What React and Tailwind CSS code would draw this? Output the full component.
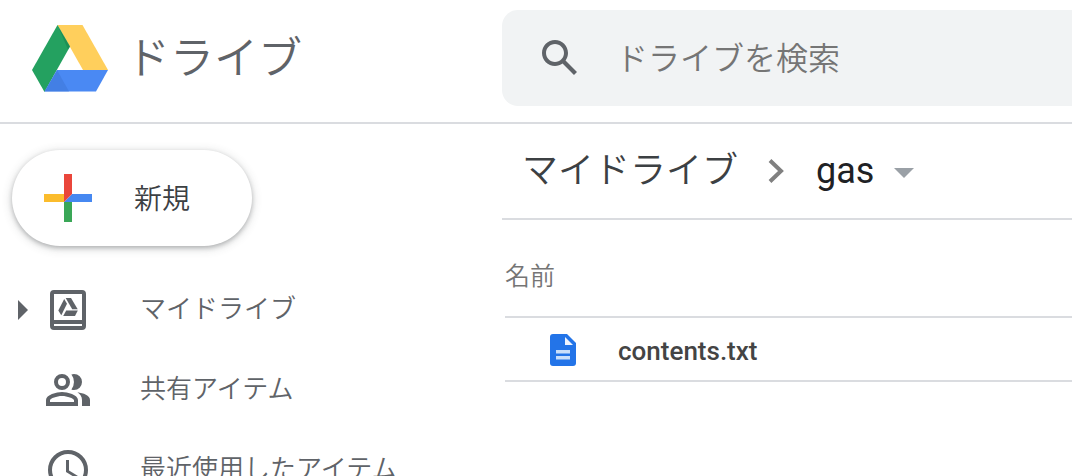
import React from "react";

function DriveLogo() {
  return (
    <svg viewBox="0 0 76 67" className="h-[67px] w-[76px] shrink-0" aria-hidden="true">
      <path d="M25.5 0H50.5L76 45H51Z" fill="#ffcf5c" />
      <path d="M0 45L25.5 0L38 21.500L12.5 67Z" fill="#24a160" />
      <path d="M25.5 0L38 21.500L36 24.500Z" fill="#15804a" opacity=".5" />
      <path d="M12.5 66.500L25 45H76L64 66.500Z" fill="#4a89f3" />
      <path d="M12.5 66.500L25 45L37 66.500Z" fill="#3f78da" opacity=".6" />
    </svg>
  );
}

function SearchIcon() {
  return (
    <svg viewBox="0 0 24 24" className="size-12" fill="#5f6368" aria-hidden="true">
      <path d="M20.49,19l-5.73-5.73C15.53,12.2,16,10.91,16,9.5C16,5.91,13.09,3,9.5,3S3,5.91,3,9.5C3,13.09,5.91,16,9.5,16c1.41,0,2.7-0.47,3.77-1.24L19,20.49L20.49,19z M5,9.5C5,7.01,7.01,5,9.5,5S14,7.01,14,9.5S11.99,14,9.5,14S5,11.99,5,9.5z" />
    </svg>
  );
}

function PlusIcon() {
  return (
    <svg viewBox="0 0 48 48" className="size-12 shrink-0" aria-hidden="true">
      <path d="M20 28V48H28V28L24 26Z" fill="#3aa757" />
      <path d="M20 28L28 20H48V28Z" fill="#4688f1" />
      <path d="M0 20H20V28H0Z" fill="#fbbc2c" />
      <path d="M20 0H28V20L20 28Z" fill="#ea463b" />
    </svg>
  );
}

function MyDriveIcon() {
  return (
    <svg viewBox="0 0 48 48" className="size-12" fill="#5f6368" aria-hidden="true">
      <path fillRule="evenodd" d="M10 4H38a4 4 0 0 1 4 4V40a4 4 0 0 1-4 4H10a4 4 0 0 1-4-4V8a4 4 0 0 1 4-4ZM10 8V34H38V8ZM10 38V40H38V38Z" />
      <path d="M20.2 13L23 17.8L17.300 29.300L14.3 24.500Z" />
      <path d="M21.700 12H27L33.700 23.200H28.200Z" />
      <path d="M22.200 24.500H33.800L31 30H19.200Z" />
    </svg>
  );
}

function PeopleIcon() {
  return (
    <svg viewBox="0 0 48 48" className="size-12" fill="#5f6368" aria-hidden="true">
      <path fillRule="evenodd" d="M18 24a8 8 0 1 0 0-16 8 8 0 0 0 0 16ZM18 12a4 4 0 1 1 0 8 4 4 0 0 1 0-8Z" />
      <path fillRule="evenodd" d="M18 26C12.7 26 2 28.7 2 34V40H34V34C34 28.7 23.3 26 18 26ZM6 36V34C6.400 32.600 12.600 30 18 30S29.600 32.600 30 34V36Z" />
      <path d="M27.400 23.400A12 12 0 0 0 27.400 8.600C28.200 8.200 29.100 8 30 8a8 8 0 0 1 0 16c-.9 0-1.800-.2-2.600-.6Z" />
      <path d="M33.400 26.300C36.100 28.200 38 30.700 38 34V40H46V34C46 29.400 39.400 27.200 33.400 26.300Z" />
    </svg>
  );
}

function ClockIcon() {
  return (
    <svg viewBox="0 0 48 48" className="size-12" aria-hidden="true">
      <circle cx="24" cy="24" r="18" fill="none" stroke="#5f6368" strokeWidth="4" />
      <path d="M22 14H25V24.500L34 30L32.500 32.400L22 26Z" fill="#5f6368" />
    </svg>
  );
}

function FileIcon() {
  return (
    <svg viewBox="0 0 28 32" className="h-8 w-7" aria-hidden="true">
      <path d="M4 0H18L27 9V29a3 3 0 0 1-3 3H4a3 3 0 0 1-3-3V3a3 3 0 0 1 3-3Z" fill="#2374e8" />
      <path d="M16 3L24 11H16Z" fill="#eef4fe" />
      <path d="M7 16H21V19.500H7ZM7 22H21V25.500H7Z" fill="#c9defa" />
    </svg>
  );
}

const navItems = [
  { label: "マイドライブ", Icon: MyDriveIcon, expandable: true },
  { label: "共有アイテム", Icon: PeopleIcon },
  { label: "最近使用したアイテム", Icon: ClockIcon },
];

export default function App() {
  return (
    <div className="h-screen overflow-hidden bg-white font-['Noto_Sans_CJK_JP',sans-serif] font-[350] text-[#5f6368]">
      <header className="flex border-b-2 border-[#dadce0] pt-[10px] pb-4">
        <a href="#" className="flex w-[502px] shrink-0 items-center gap-[18px] pl-8">
          <DriveLogo />
          <span className="pb-1.5 text-[44px] leading-[56px]">ドライブ</span>
        </a>
        <form role="search" className="flex h-24 min-w-0 flex-1 items-center rounded-l-2xl bg-[#f1f3f4] pl-[34px]">
          <button type="button" aria-label="検索" className="size-12 shrink-0">
            <SearchIcon />
          </button>
          <input
            type="search"
            aria-label="ドライブを検索"
            placeholder="ドライブを検索"
            className="ml-8 h-12 min-w-0 flex-1 bg-transparent pb-1 text-[32px] leading-12 outline-none placeholder:text-[#757575]"
          />
        </form>
      </header>

      <div className="flex">
        <aside className="w-[502px] shrink-0 pt-[26px]">
          <button className="ml-3 flex h-24 w-60 items-center gap-[42px] rounded-full bg-white pl-8 text-[28px] text-[#3c4043] shadow-[0_2px_4px_rgba(60,64,67,0.3),0_2px_8px_2px_rgba(60,64,67,0.15)]">
            <PlusIcon />
            <span className="pb-0.5">新規</span>
          </button>
          <nav className="mt-6">
            <ul>
              {navItems.map(({ label, Icon, expandable }) => (
                <li key={label}>
                  <a href="#" className="flex h-20 items-center text-[26px] leading-10">
                    <span className="flex w-11 justify-end pr-4">
                      {expandable && (
                        <svg viewBox="0 0 10 20" className="h-5 w-[10px]" aria-hidden="true">
                          <path d="M0 0L10 10L0 20Z" fill="#5f6368" />
                        </svg>
                      )}
                    </span>
                    <Icon />
                    <span className="ml-12 pb-1.5">{label}</span>
                  </a>
                </li>
              ))}
            </ul>
          </nav>
        </aside>

        <main className="min-w-0 flex-1">
          <nav aria-label="パンくずリスト" className="flex h-24 items-center border-b-2 border-[#dadce0] pl-5 text-[36px] leading-12">
            <a href="#" className="pb-2 text-[#3c4043]">マイドライブ</a>
            <svg viewBox="0 0 16 24" className="ml-[30px] h-6 w-4" aria-hidden="true">
              <path d="M2 1.500L13 12L2 22.500" fill="none" stroke="#808080" strokeWidth="4" />
            </svg>
            <button className="ml-8 flex items-center gap-5 font-['Roboto',sans-serif] font-normal text-[#202124]">
              gas
              <svg viewBox="0 0 20 10" className="mt-1 h-[10px] w-5" aria-hidden="true">
                <path d="M0 0H20L10 10Z" fill="#9aa0a6" />
              </svg>
            </button>
          </nav>
          <div className="pl-[3px]">
            <table className="w-full border-separate border-spacing-0 text-left">
              <thead>
                <tr>
                  <th scope="col" className="h-[98px] border-b-2 border-[#dadce0] p-0 pt-3 text-[25px] leading-10 font-[350] text-[#757575]">名前</th>
                </tr>
              </thead>
              <tbody>
                <tr>
                  <td className="h-16 border-b-2 border-[#dadce0] p-0 pt-px">
                    <a href="#" className="flex items-center gap-[41px] pl-11 font-['Roboto',sans-serif] text-[26px] leading-8 font-medium text-[#444]">
                      <FileIcon />
                      <span className="pt-0.5">contents.txt</span>
                    </a>
                  </td>
                </tr>
              </tbody>
            </table>
          </div>
        </main>
      </div>
    </div>
  );
}
